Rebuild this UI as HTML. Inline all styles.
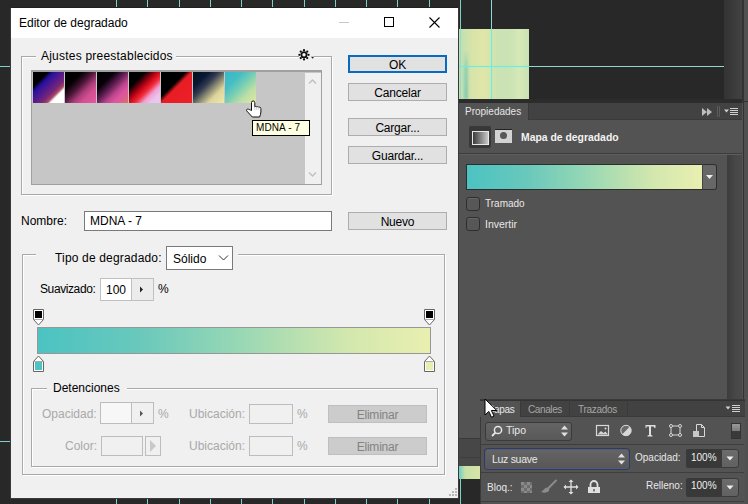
<!DOCTYPE html>
<html><head><meta charset="utf-8">
<style>
*{margin:0;padding:0;box-sizing:border-box}
html,body{width:748px;height:504px;overflow:hidden;background:#282828;font-family:"Liberation Sans",sans-serif}
.a{position:absolute}
.t{position:absolute;white-space:nowrap;line-height:12px;font-size:12px;color:#000}
.vg{position:absolute;top:0;width:1px;height:504px;background:#7fd0c9}
.hg{position:absolute;left:0;height:1px;background:#7fd0c9}
.btn{position:absolute;background:#e1e1e1;border:1px solid #adadad;text-align:center;font-size:12px;line-height:16px;padding-top:1px;color:#000;letter-spacing:-0.2px}
.gb{position:absolute;border:1px solid #a9a9a9;box-shadow:inset 1px 1px 0 #fff, 1px 1px 0 #fff}
.pt{position:absolute;white-space:nowrap;font-size:11px;line-height:11px;color:#e8e8e8}
</style></head><body>

<!-- canvas guides -->
<div class="vg" style="left:116px"></div>
<div class="vg" style="left:147px"></div>
<div class="vg" style="left:179px"></div>
<div class="vg" style="left:210px"></div>
<div class="vg" style="left:241px"></div>
<div class="vg" style="left:272px"></div>
<div class="vg" style="left:304px"></div>
<div class="vg" style="left:335px"></div>
<div class="vg" style="left:366px"></div>
<div class="vg" style="left:397px"></div>
<div class="vg" style="left:429px"></div>
<div class="hg" style="top:66px;width:10px"></div>
<div class="hg" style="top:441px;width:10px"></div>

<!-- right canvas area -->
<div class="a" style="left:459px;top:29px;width:70px;height:70px;background:linear-gradient(to right,#b8e0b8 0%,#cce2ac 10%,#dae4a8 22%,#e0e6a8 36%,#d6e4ac 46%,#cae2b4 58%,#cce4b4 76%,#d8e8b8 86%,#c8e2b2 100%)"></div>
<div class="a" style="left:462px;top:50px;width:8px;height:49px;filter:blur(1.2px);background:linear-gradient(to bottom,rgba(110,195,178,0),rgba(110,195,178,.6) 40%,rgba(110,195,178,.75));-webkit-mask-image:linear-gradient(to right,transparent,#000 50%,transparent)"></div>
<div class="a" style="left:460px;top:0;width:1px;height:29px;background:#7fd0c9"></div><div class="a" style="left:460px;top:29px;width:1px;height:70px;background:rgba(127,208,201,.5)"></div>
<div class="a" style="left:491px;top:0;width:1px;height:29px;background:#8fd8d2"></div><div class="a" style="left:491px;top:29px;width:1px;height:70px;background:#66f0e4;box-shadow:0 0 1px #66f0e4"></div>
<div class="a" style="left:529px;top:66px;width:195px;height:1px;background:#8fd8d2"></div><div class="a" style="left:459px;top:66px;width:70px;height:1px;background:#66f0e4;box-shadow:0 0 1px #66f0e4"></div>
<div class="a" style="left:724px;top:0;width:18px;height:99px;background:linear-gradient(to right,#333,#424242)"></div>
<div class="a" style="left:742px;top:0;width:2px;height:504px;background:#333"></div>
<div class="a" style="left:744px;top:0;width:4px;height:504px;background:#505050"></div>
<div class="a" style="left:744px;top:101px;width:4px;height:1px;background:#333"></div>
<div class="a" style="left:458px;top:99px;width:284px;height:4px;background:#2c2c2c"></div>

<!-- properties panel -->
<div class="a" style="left:458px;top:103px;width:285px;height:335px;background:#535353;border-left:1px solid #3a3a3a"></div>
<div class="a" style="left:458px;top:103px;width:284px;height:17px;background:#424242;border-bottom:1px solid #3a3a3a"></div>
<div class="a" style="left:458px;top:103px;width:71px;height:17px;background:#535353;border-left:1px solid #3a3a3a;border-right:1px solid #3a3a3a"></div>
<div class="pt" style="left:465px;top:107px;color:#e6e6e6;font-size:10px;line-height:10px">Propiedades</div>
<svg class="a" style="left:700px;top:105px" width="42" height="14" viewBox="0 0 42 14">
<path d="M2 3l5 4-5 4z M7 3l5 4-5 4z" fill="#bdbdbd"/>
<path d="M17.5 1v11M19.5 1v11" stroke="#5c5c5c" stroke-width="1"/>
<path d="M24 4.5h5l-2.5 3z" fill="#d0d0d0"/>
<path d="M30 3.5h8M30 5.5h8M30 7.5h8M30 9.5h8" stroke="#d0d0d0" stroke-width="1"/>
</svg>
<div class="a" style="left:458px;top:153px;width:284px;height:1px;background:#3c3c3c"></div>
<div class="a" style="left:458px;top:154px;width:284px;height:1px;background:#5e5e5e"></div>
<div class="a" style="left:727px;top:155px;width:15px;height:244px;background:linear-gradient(to right,#3c3c3c,#484848 60%,#4a4a4a)"></div>
<div class="a" style="left:469px;top:126px;width:22px;height:22px;background:#383838;border-radius:2px"></div>
<div class="a" style="left:472px;top:131px;width:17px;height:14px;border:1px solid #e8e8e8;background:linear-gradient(to right,#3c3c3c,#c8c8c8)"></div>
<div class="a" style="left:495px;top:129px;width:17px;height:14px;background:#d3d3d3;border-top:1px solid #222"></div>
<div class="a" style="left:500px;top:132px;width:7px;height:7px;border-radius:50%;background:#585858"></div>
<div class="pt" style="left:521px;top:133px;font-weight:bold;color:#f2f2f2;font-size:10.4px;line-height:10px">Mapa de degradado</div>
<div class="a" style="left:466px;top:164px;width:237px;height:26px;border:1px solid #2e2e2e;background:linear-gradient(to right,#4cc3c2 0%,#68c8bc 25%,#95d7b5 50%,#b6dfb0 65%,#d4e8ae 80%,#e9efb0 100%)"></div>
<div class="a" style="left:702px;top:164px;width:15px;height:26px;background:#676767;border:1px solid #2e2e2e;border-left:1px solid #444;border-radius:0 3px 3px 0"></div>
<svg class="a" style="left:705px;top:174px" width="9" height="6" viewBox="0 0 9 6"><path d="M1 1h7l-3.5 4z" fill="#eee"/></svg>
<div class="a" style="left:466px;top:197px;width:14px;height:14px;background:#575757;border:1px solid #2e2e2e;border-radius:3px;box-shadow:inset 0 1px 0 #666"></div>
<div class="pt" style="left:485px;top:199px;font-size:10px;line-height:10px">Tramado</div>
<div class="a" style="left:466px;top:217px;width:14px;height:14px;background:#575757;border:1px solid #2e2e2e;border-radius:3px;box-shadow:inset 0 1px 0 #666"></div>
<div class="pt" style="left:485px;top:219px;font-size:10.5px;line-height:10px">Invertir</div>

<!-- lower-left strip -->
<div class="a" style="left:458px;top:438px;width:22px;height:1px;background:#3a3a3a"></div>
<div class="a" style="left:458px;top:439px;width:22px;height:27px;background:#474747"></div>
<div class="a" style="left:458px;top:457px;width:22px;height:1px;background:#3e3e3e"></div>
<div class="a" style="left:458px;top:479px;width:22px;height:25px;background:#282828"></div>
<div class="a" style="left:459px;top:466px;width:21px;height:13px;background:linear-gradient(to right,#6fcfc0 0%,#c8e0a8 30%,#d7e4a6 100%)"></div>
<div class="a" style="left:460px;top:466px;width:1px;height:38px;background:#7fd0c9"></div>

<!-- layers panel -->
<div class="a" style="left:480px;top:399px;width:265px;height:105px;background:#535353;border-top:1px solid #3a3a3a;border-left:1px solid #3a3a3a"></div>
<div class="a" style="left:480px;top:400px;width:265px;height:17px;background:#424242;border-bottom:1px solid #3a3a3a;border-top:1px solid #333"></div>
<div class="a" style="left:480px;top:400px;width:41px;height:17px;background:#535353;border-right:1px solid #3a3a3a;border-top:1px solid #333"></div>
<div class="pt" style="left:487px;top:405px;letter-spacing:-0.3px;font-size:10px;line-height:10px">Capas</div>
<div class="a" style="left:521px;top:400px;width:49px;height:17px;border-right:1px solid #3a3a3a"></div>
<div class="pt" style="left:528px;top:405px;letter-spacing:-0.4px;color:#a6a6a6;font-size:10px;line-height:10px">Canales</div>
<div class="a" style="left:570px;top:400px;width:58px;height:17px;border-right:1px solid #3a3a3a"></div>
<div class="pt" style="left:578px;top:405px;letter-spacing:-0.3px;color:#a6a6a6;font-size:10px;line-height:10px">Trazados</div>
<svg class="a" style="left:724px;top:402px" width="18" height="12" viewBox="0 0 18 12">
<path d="M1.5 4.5h5l-2.5 3z" fill="#d0d0d0"/>
<path d="M8 3.5h8M8 5.5h8M8 7.5h8M8 9.5h8" stroke="#d0d0d0" stroke-width="1"/>
</svg>
<div class="a" style="left:485px;top:422px;width:87px;height:19px;background:linear-gradient(#646464,#585858);border:1px solid #3a3a3a;border-radius:3px"></div>
<svg class="a" style="left:490px;top:424px" width="14" height="14" viewBox="0 0 14 14"><circle cx="8" cy="6" r="3.6" stroke="#e8e8e8" stroke-width="1.5" fill="none"/><path d="M5.4 8.6L2 12" stroke="#e8e8e8" stroke-width="1.8"/></svg>
<div class="pt" style="left:506px;top:425px;font-size:10.5px;line-height:10px">Tipo</div>
<svg class="a" style="left:560px;top:425px" width="9" height="12" viewBox="0 0 9 12"><path d="M1 4.5l3.5-4 3.5 4z M1 7.5l3.5 4 3.5-4z" fill="#e0e0e0"/></svg>
<svg class="a" style="left:594px;top:423px" width="114" height="16" viewBox="0 0 114 16">
<rect x="2.5" y="2.5" width="12" height="10" fill="none" stroke="#d8d8d8" stroke-width="1.2"/>
<path d="M3.5 11.5l3.5-3.5 2.5 2 2-1.5 2.5 3z" fill="#d8d8d8"/><circle cx="11.5" cy="5.5" r="1" fill="#d8d8d8"/>
<circle cx="32" cy="7.5" r="5.2" fill="#d8d8d8"/><path d="M28.3 11.2A5.2 5.2 0 0 1 35.7 3.8z" fill="#6a6a6a"/><circle cx="32" cy="7.5" r="5.2" fill="none" stroke="#d8d8d8" stroke-width="1"/>
<path d="M51.5 2h10v3h-1l-.8-1.6h-2.7v8.6l1.5.6v1h-5v-1l1.5-.6V3.4h-2.7L52.5 5h-1z" fill="#dedede"/>
<rect x="77" y="3" width="9" height="9" fill="none" stroke="#d8d8d8" stroke-width="1"/>
<circle cx="77" cy="3" r="1.5" fill="#535353" stroke="#d8d8d8"/><circle cx="86" cy="3" r="1.5" fill="#535353" stroke="#d8d8d8"/><circle cx="77" cy="12" r="1.5" fill="#535353" stroke="#d8d8d8"/><circle cx="86" cy="12" r="1.5" fill="#535353" stroke="#d8d8d8"/>
<path d="M102.5 1.5h5l3 3v9h-8z" fill="none" stroke="#d8d8d8" stroke-width="1"/><path d="M107.5 1.5v3h3" fill="none" stroke="#d8d8d8"/>
<rect x="99" y="8" width="6" height="6" fill="#c8c8c8"/>
</svg>
<div class="a" style="left:731px;top:423px;width:10px;height:16px;background:#3a3a3a;border:1px solid #333"></div>
<div class="a" style="left:732px;top:424px;width:8px;height:7px;background:linear-gradient(#9a9a9a,#7a7a7a)"></div>
<div class="a" style="left:480px;top:444px;width:264px;height:1px;background:#3e3e3e"></div>
<div class="a" style="left:485px;top:449px;width:144px;height:20px;background:linear-gradient(#646464,#575757);border:1px solid #4a5a98;border-radius:3px;box-shadow:0 0 0 1px #3c3c3c"></div>
<div class="pt" style="left:492px;top:454px;letter-spacing:-0.3px;font-size:10.5px;line-height:10px">Luz suave</div>
<svg class="a" style="left:617px;top:453px" width="9" height="12" viewBox="0 0 9 12"><path d="M1 4.5l3.5-4 3.5 4z M1 7.5l3.5 4 3.5-4z" fill="#e0e0e0"/></svg>
<div class="pt" style="left:635px;top:453px;font-size:10px;line-height:10px">Opacidad:</div>
<div class="a" style="left:686px;top:449px;width:35px;height:19px;background:#393939;border-radius:2px 0 0 2px"></div>
<div class="pt" style="left:691px;top:453px;font-size:10px;line-height:10px;color:#f0f0f0">100%</div>
<div class="a" style="left:721px;top:449px;width:18px;height:19px;background:linear-gradient(#6c6c6c,#616161);border:1px solid #3a3a3a;border-radius:0 3px 3px 0"></div>
<svg class="a" style="left:726px;top:456px" width="8" height="5" viewBox="0 0 8 5"><path d="M0.5 0.5h7l-3.5 4z" fill="#eee"/></svg>
<div class="a" style="left:480px;top:472px;width:264px;height:1px;background:#3e3e3e"></div>
<div class="pt" style="left:487px;top:483px;font-size:10px;line-height:10px">Bloq.:</div>
<svg class="a" style="left:520px;top:479px" width="82" height="16" viewBox="0 0 82 16">
<rect x="1" y="3" width="11" height="11" fill="#6e6e6e"/>
<path d="M1 3h3v3H1zM7 3h3v3H7zM4 6h3v3H4zM10 6h2v3h-2zM1 9h3v3H1zM7 9h3v3H7zM4 12h3v2H4zM10 12h2v2h-2z" fill="#8a8a8a"/>
<path d="M36.5 1L28 9.5" stroke="#8c8c8c" stroke-width="2"/><path d="M21 13c2-1 3.5-4.5 6.5-4.5l1.8 1.8c0 3-3.5 4.2-8.3 2.7z" fill="#8c8c8c"/>
<path d="M51 1.5v13M44.5 8h13" stroke="#e0e0e0" stroke-width="1.3"/>
<path d="M51 0.5l-2.5 2.5h5zM51 15.5l-2.5-2.5h5zM43.5 8l2.5-2.5v5zM58.5 8l-2.5-2.5v5z" fill="#e0e0e0"/>
<path d="M70.5 8V5.5a3.5 3.5 0 0 1 7 0V8" stroke="#e0e0e0" stroke-width="1.8" fill="none"/>
<rect x="68" y="8" width="12" height="6" fill="#e0e0e0"/><rect x="73.3" y="10" width="1.4" height="2.5" fill="#535353"/>
</svg>
<div class="pt" style="left:646px;top:481px;font-size:10px;line-height:10px">Relleno:</div>
<div class="a" style="left:686px;top:478px;width:35px;height:19px;background:#393939;border-radius:2px 0 0 2px"></div>
<div class="pt" style="left:691px;top:481px;font-size:10px;line-height:10px;color:#f0f0f0">100%</div>
<div class="a" style="left:721px;top:478px;width:18px;height:19px;background:linear-gradient(#6c6c6c,#616161);border:1px solid #3a3a3a;border-radius:0 3px 3px 0"></div>
<svg class="a" style="left:726px;top:485px" width="8" height="5" viewBox="0 0 8 5"><path d="M0.5 0.5h7l-3.5 4z" fill="#eee"/></svg>
<div class="a" style="left:480px;top:501px;width:264px;height:1px;background:#3e3e3e"></div>
<!-- mouse arrow -->
<svg class="a" style="left:484px;top:398px" width="14" height="21" viewBox="0 0 14 21"><path d="M1 1v16l3.8-3.6 2.7 5.9 2.5-1.2-2.6-5.6h5.4z" fill="#fff" stroke="#000" stroke-width="1"/></svg>

<!-- dialog -->
<div class="a" style="left:10px;top:7px;width:449px;height:492px;background:#f0f0f0;border:1px solid #3a3a3a;border-top-color:#202020"></div>
<div class="a" style="left:11px;top:8px;width:447px;height:30px;background:#fff"></div>
<div class="t" style="left:19px;top:17px">Editor de degradado</div>
<div class="a" style="left:339px;top:22px;width:10px;height:1px;background:#c8c8c8"></div>
<div class="a" style="left:384px;top:17px;width:10px;height:10px;border:1px solid #000"></div>

<!-- presets group -->
<div class="gb" style="left:21px;top:56px;width:311px;height:139px"></div>
<div class="a" style="left:36px;top:50px;width:140px;height:12px;background:#f0f0f0"></div>
<div class="t" style="left:41px;top:50px;letter-spacing:0.22px">Ajustes preestablecidos</div>
<div class="a" style="left:299px;top:48px;width:15px;height:12px;background:#f0f0f0"></div>
<div class="a" style="left:31px;top:70px;width:291px;height:115px;background:#c6c6c6;border:1px solid #a0a0a0;border-top:2px solid #a0a0a0"></div>
<div class="a" style="left:305px;top:73px;width:16px;height:111px;background:#f0f0f0"></div>


<!-- swatches -->
<div class="a" style="left:33px;top:72px;width:31px;height:31px;background:linear-gradient(135deg,#000 0%,#000 24%,#2010a0 33%,#3c1498 40%,#5a1c88 52%,#7a2878 64%,#a84860 72%,#fff 78%,#fff 100%)"></div>
<div class="a" style="left:65px;top:72px;width:31px;height:31px;background:linear-gradient(135deg,#000 0%,#050003 28%,#4a1638 46%,#a83c78 62%,#d44e92 76%,#e45a9c 100%)"></div>
<div class="a" style="left:97px;top:72px;width:31px;height:31px;background:linear-gradient(135deg,#000 0%,#080008 28%,#5a1c50 46%,#c0468c 64%,#dc54a0 76%,#d87070 100%)"></div>
<div class="a" style="left:129px;top:72px;width:31px;height:31px;background:linear-gradient(135deg,#000 0%,#000 26%,#8a0010 40%,#e01020 52%,#f03040 60%,#f0a0d0 72%,#ecc4f0 85%,#e8c8f0 100%)"></div>
<div class="a" style="left:161px;top:72px;width:31px;height:31px;background:linear-gradient(135deg,#000 0%,#000 40%,#e81c24 50%,#ec2028 100%)"></div>
<div class="a" style="left:193px;top:72px;width:31px;height:31px;background:linear-gradient(135deg,#041010 0%,#0a1838 26%,#343c50 42%,#8a8a74 58%,#dcd49a 74%,#f2eaa8 100%)"></div>
<div class="a" style="left:225px;top:72px;width:31px;height:31px;background:linear-gradient(135deg,#34b8c8 0%,#44bec4 28%,#78ceb4 50%,#bcdea6 72%,#dfe8a2 100%)"></div>

<!-- buttons -->
<div class="btn" style="left:348px;top:55px;width:99px;height:18px;border:2px solid #0a6ac0;line-height:14px">OK</div>
<div class="btn" style="left:348px;top:83px;width:99px;height:18px">Cancelar</div>
<div class="btn" style="left:348px;top:118px;width:99px;height:18px">Cargar...</div>
<div class="btn" style="left:348px;top:146px;width:99px;height:18px">Guardar...</div>
<div class="btn" style="left:348px;top:212px;width:99px;height:18px">Nuevo</div>

<!-- nombre -->
<div class="t" style="left:21px;top:215px">Nombre:</div>
<div class="a" style="left:84px;top:211px;width:248px;height:20px;background:#fff;border:1px solid #7a7a7a"></div>
<div class="t" style="left:90px;top:215px">MDNA - 7</div>

<!-- tipo group -->
<div class="gb" style="left:22px;top:254px;width:423px;height:221px"></div>
<div class="a" style="left:36px;top:246px;width:202px;height:24px;background:#f0f0f0"></div>
<div class="t" style="left:55px;top:252px;letter-spacing:0.17px">Tipo de degradado:</div>
<div class="a" style="left:166px;top:246px;width:67px;height:24px;background:#fff;border:1px solid #7a7a7a"></div>
<div class="t" style="left:173px;top:253px">Sólido</div>
<div class="t" style="left:40px;top:283px;letter-spacing:-0.4px">Suavizado:</div>
<div class="a" style="left:100px;top:278px;width:54px;height:23px;background:#fff;border:1px solid #c0c0c0"></div>
<div class="a" style="left:131px;top:279px;width:22px;height:21px;background:#ececec;border-left:1px solid #c0c0c0"></div>
<div class="t" style="left:106px;top:284px">100</div>
<div class="t" style="left:158px;top:283px">%</div>

<!-- gradient bar -->
<div class="a" style="left:37px;top:327px;width:394px;height:27px;border:1px solid #979797;background:linear-gradient(to right,#4cc3c2 0%,#68c8bc 25%,#95d7b5 50%,#b6dfb0 65%,#d4e8ae 80%,#e9efb0 100%)"></div>

<!-- detenciones -->
<div class="gb" style="left:31px;top:388px;width:407px;height:79px"></div>
<div class="a" style="left:47px;top:382px;width:80px;height:12px;background:#f0f0f0"></div>
<div class="t" style="left:53px;top:382px">Detenciones</div>
<div class="t" style="left:42px;top:408px;color:#a9a9a9">Opacidad:</div>
<div class="a" style="left:100px;top:402px;width:54px;height:22px;background:#f0f0f0;border:1px solid #bdbdbd"></div><div class="a" style="left:101px;top:403px;width:30px;height:20px;background:#f7f7f7"></div>
<div class="a" style="left:131px;top:403px;width:22px;height:20px;border-left:1px solid #bdbdbd"></div>
<div class="t" style="left:158px;top:408px;color:#a9a9a9">%</div>
<div class="t" style="left:65px;top:440px;color:#a9a9a9">Color:</div>
<div class="a" style="left:101px;top:436px;width:42px;height:20px;border:1px solid #bdbdbd"></div>
<div class="a" style="left:145px;top:436px;width:16px;height:20px;border:1px solid #bdbdbd"></div>
<div class="t" style="left:189px;top:408px;color:#a9a9a9">Ubicación:</div>
<div class="a" style="left:249px;top:404px;width:44px;height:20px;border:1px solid #bdbdbd"></div>
<div class="t" style="left:297px;top:408px;color:#a9a9a9">%</div>
<div class="btn" style="left:328px;top:405px;width:99px;height:18px;background:#cccccc;border-color:#bfbfbf;color:#838383">Eliminar</div>
<div class="t" style="left:189px;top:440px;color:#a9a9a9">Ubicación:</div>
<div class="a" style="left:249px;top:436px;width:44px;height:20px;border:1px solid #bdbdbd"></div>
<div class="t" style="left:297px;top:440px;color:#a9a9a9">%</div>
<div class="btn" style="left:328px;top:437px;width:99px;height:18px;background:#cccccc;border-color:#bfbfbf;color:#838383">Eliminar</div>


<!-- dialog icons -->
<svg class="a" style="left:428px;top:16px" width="13" height="13" viewBox="0 0 13 13"><path d="M1.5 1.5L11.5 11.5M11.5 1.5L1.5 11.5" stroke="#000" stroke-width="1.1"/></svg>
<svg class="a" style="left:296px;top:47px" width="22" height="16" viewBox="0 0 22 16">
<g fill="#111"><circle cx="8" cy="7.8" r="3.5"/>
<circle cx="8" cy="3.2" r="1.15"/><circle cx="8" cy="12.4" r="1.15"/><circle cx="3.4" cy="7.8" r="1.15"/><circle cx="12.6" cy="7.8" r="1.15"/>
<circle cx="4.75" cy="4.55" r="1.15"/><circle cx="11.25" cy="4.55" r="1.15"/><circle cx="4.75" cy="11.05" r="1.15"/><circle cx="11.25" cy="11.05" r="1.15"/></g>
<circle cx="8" cy="7.8" r="1.7" fill="#f4f4f4"/>
<path d="M15 9.8h3.2l-1.6 2z" fill="#222"/>
</svg>
<svg class="a" style="left:308px;top:78px" width="9" height="7" viewBox="0 0 9 7"><path d="M1 5.5L4.5 2L8 5.5" stroke="#c0c0c0" stroke-width="1.5" fill="none"/></svg>
<svg class="a" style="left:308px;top:171px" width="9" height="7" viewBox="0 0 9 7"><path d="M1 1.5L4.5 5L8 1.5" stroke="#c0c0c0" stroke-width="1.5" fill="none"/></svg>
<!-- tooltip -->
<div class="a" style="left:252px;top:120px;width:58px;height:16px;background:#ffffe1;border:1px solid #000"></div>
<div class="t" style="left:256px;top:123px;font-size:10px;line-height:10px;letter-spacing:0.1px">MDNA - 7</div>
<!-- hand cursor -->
<svg class="a" style="left:245px;top:99px" width="19" height="20" viewBox="0 0 19 20">
<path d="M6.5 11.5V3.6a1.65 1.65 0 0 1 3.3 0V7.8c.5-.5 1.6-.5 2 .2.5-.5 1.6-.5 2 .3.6-.4 1.7-.2 2 .8.1.3.1 1 .1 1.6V13c0 1.6-.7 3.4-1.3 5H7.3L1.9 12.1c-.8-.9-.3-2 .8-2 .9 0 2 .6 3.8 1.4z" fill="#fff" stroke="#111" stroke-width="1"/>
<path d="M9.8 8v3M11.8 8.2v2.8M13.8 8.5v2.5" stroke="#bbb" stroke-width=".7"/>
</svg>
<!-- solido chevron -->
<svg class="a" style="left:218px;top:254px" width="11" height="7" viewBox="0 0 11 7"><path d="M1 1.5L5.5 6L10 1.5" stroke="#333" stroke-width="1" fill="none"/></svg>
<svg class="a" style="left:139px;top:286px" width="5" height="7" viewBox="0 0 5 7"><path d="M1 0.5L4 3.5L1 6.5z" fill="#222"/></svg>
<!-- stops -->
<svg class="a" style="left:33px;top:309px" width="11" height="17" viewBox="0 0 11 17"><path d="M0.5 0.5h10v10l-5 5.5-5-5.5z" fill="#fff" stroke="#666" stroke-width="1"/><rect x="2" y="2" width="7" height="7" fill="#000"/><path d="M1 10.5h9" stroke="#aaa"/></svg>
<svg class="a" style="left:33px;top:355px" width="11" height="17" viewBox="0 0 11 17"><path d="M0.5 16.5h10v-10l-5-5.5-5 5.5z" fill="#fff" stroke="#666" stroke-width="1"/><rect x="2" y="7" width="7" height="8" fill="#4fc3c3"/><path d="M1 6.5h9" stroke="#aaa"/></svg>
<svg class="a" style="left:424px;top:309px" width="11" height="17" viewBox="0 0 11 17"><path d="M0.5 0.5h10v10l-5 5.5-5-5.5z" fill="#fff" stroke="#666" stroke-width="1"/><rect x="2" y="2" width="7" height="7" fill="#000"/><path d="M1 10.5h9" stroke="#aaa"/></svg>
<svg class="a" style="left:424px;top:355px" width="11" height="17" viewBox="0 0 11 17"><path d="M0.5 16.5h10v-10l-5-5.5-5 5.5z" fill="#fff" stroke="#666" stroke-width="1"/><rect x="2" y="7" width="7" height="8" fill="#e8edb0"/><path d="M1 6.5h9" stroke="#aaa"/></svg>
<svg class="a" style="left:139px;top:410px" width="5" height="7" viewBox="0 0 5 7"><path d="M1 0.5L4 3.5L1 6.5z" fill="#555"/></svg>
<svg class="a" style="left:148px;top:439px" width="10" height="14" viewBox="0 0 10 14"><path d="M2 1L8 7L2 13z" fill="#c8c8c8"/></svg>
<!-- grip -->
<svg class="a" style="left:448px;top:487px" width="10" height="10" viewBox="0 0 10 10"><g fill="#b8b8b8"><rect x="7" y="1" width="2" height="2"/><rect x="4" y="4" width="2" height="2"/><rect x="7" y="4" width="2" height="2"/><rect x="1" y="7" width="2" height="2"/><rect x="4" y="7" width="2" height="2"/><rect x="7" y="7" width="2" height="2"/></g></svg>

</body></html>
